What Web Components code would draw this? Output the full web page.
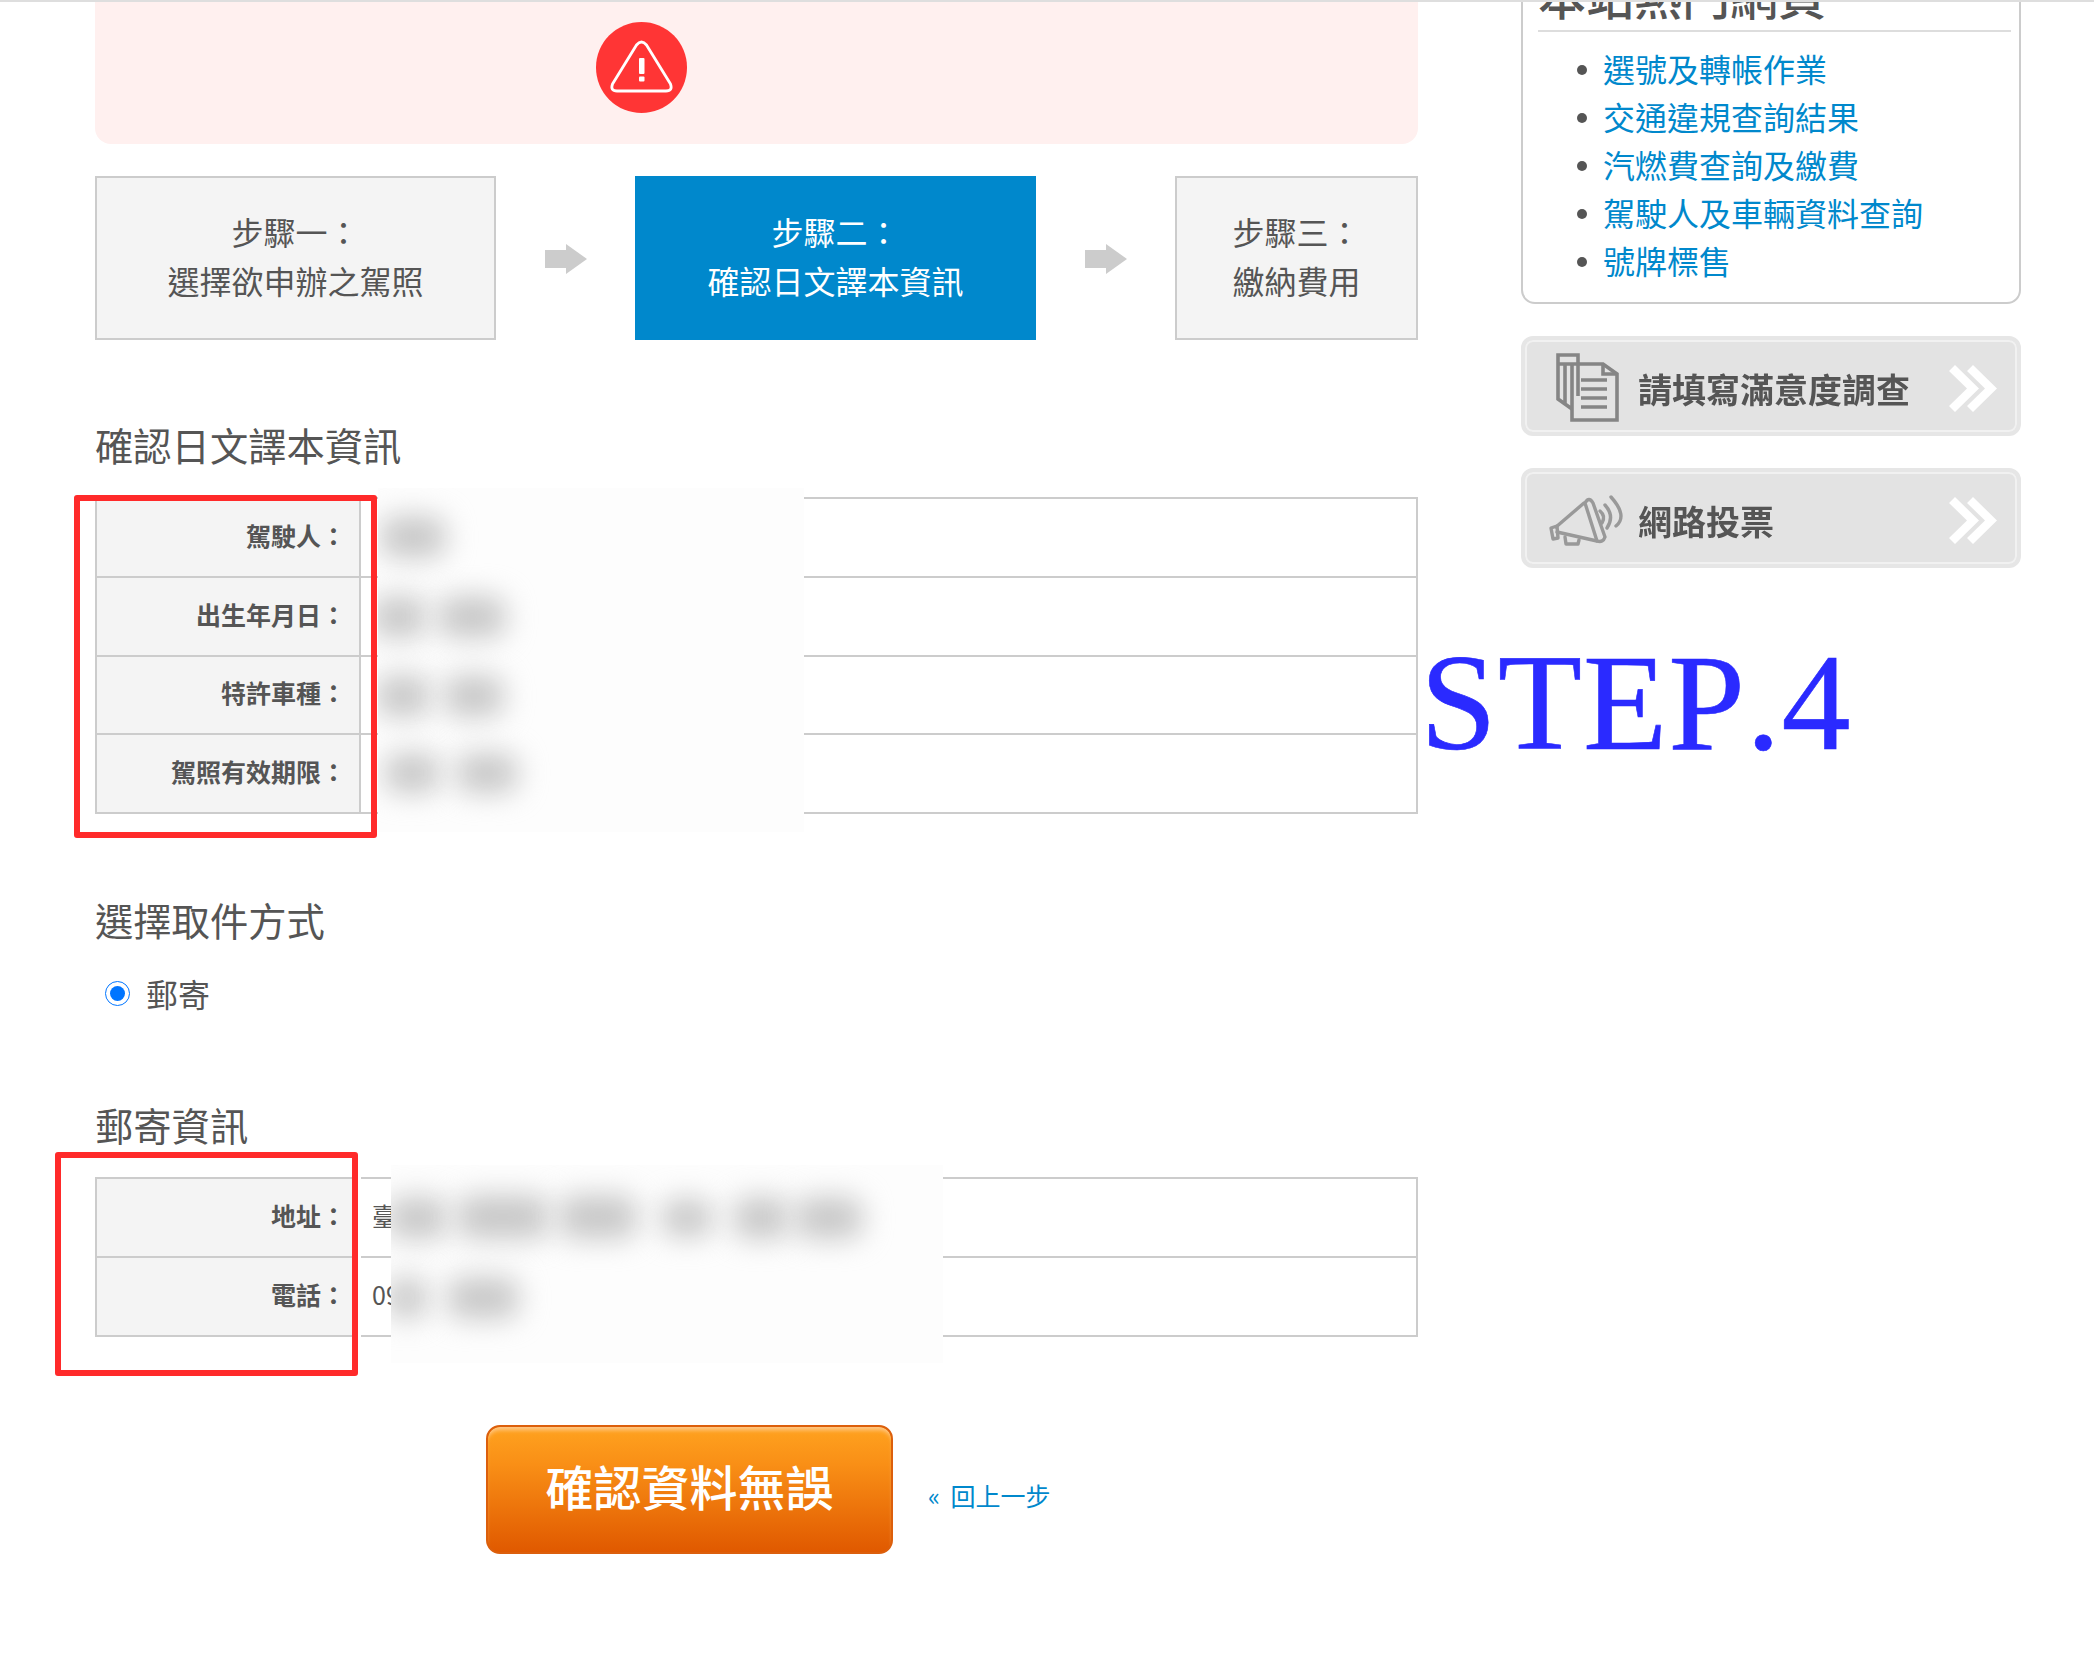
<!DOCTYPE html>
<html lang="zh-Hant">
<head>
<meta charset="utf-8">
<title>確認日文譯本資訊</title>
<style>
  html, body { margin: 0; padding: 0; background: #fff; }
  body { font-family: "Noto Sans CJK TC", "Liberation Sans", sans-serif; color: #555; }
</style>
</head>
<body>
<app-page>
  <alert-box></alert-box>
  <step-flow>
    <step-box style="width:401px">步驟一：<br>選擇欲申辦之駕照</step-box>
    <step-arrow></step-arrow>
    <step-box active style="width:401px">步驟二：<br>確認日文譯本資訊</step-box>
    <step-arrow></step-arrow>
    <step-box style="width:243px">步驟三：<br>繳納費用</step-box>
  </step-flow>

  <section-title style="margin-top:79px">確認日文譯本資訊</section-title>
  <info-table style="margin-top:24px">
    <info-row label="駕駛人："></info-row>
    <info-row label="出生年月日："></info-row>
    <info-row label="特許車種："></info-row>
    <info-row label="駕照有效期限："></info-row>
    <blur-patch style="left:281px;top:-11px;width:426px;height:344px">
      <blur-blob style="left:2px;top:28px;width:66px;height:42px"></blur-blob>
      <blur-blob style="left:-6px;top:108px;width:54px;height:42px"></blur-blob>
      <blur-blob style="left:60px;top:108px;width:68px;height:42px"></blur-blob>
      <blur-blob style="left:-2px;top:187px;width:54px;height:42px"></blur-blob>
      <blur-blob style="left:66px;top:187px;width:60px;height:42px"></blur-blob>
      <blur-blob style="left:6px;top:265px;width:56px;height:40px"></blur-blob>
      <blur-blob style="left:78px;top:265px;width:62px;height:40px"></blur-blob>
    </blur-patch>
    <mark-frame style="left:-23px;top:-4px;width:303px;height:343px"></mark-frame>
  </info-table>

  <section-title style="margin-top:80px">選擇取件方式</section-title>
  <radio-option style="margin-top:21px">郵寄</radio-option>

  <section-title style="margin-top:82px">郵寄資訊</section-title>
  <info-table style="margin-top:24px">
    <info-row label="地址：">臺</info-row>
    <info-row label="電話：">09</info-row>
    <blur-patch style="left:294px;top:-14px;width:552px;height:198px">
      <blur-blob style="left:-4px;top:32px;width:60px;height:42px"></blur-blob>
      <blur-blob style="left:66px;top:30px;width:92px;height:44px"></blur-blob>
      <blur-blob style="left:168px;top:30px;width:78px;height:44px"></blur-blob>
      <blur-blob style="left:270px;top:34px;width:52px;height:38px"></blur-blob>
      <blur-blob style="left:342px;top:32px;width:56px;height:42px"></blur-blob>
      <blur-blob style="left:404px;top:32px;width:68px;height:42px"></blur-blob>
      <blur-blob style="left:-4px;top:112px;width:40px;height:42px"></blur-blob>
      <blur-blob style="left:56px;top:112px;width:72px;height:42px"></blur-blob>
    </blur-patch>
    <mark-frame white-edge style="left:-42px;top:-27px;width:303px;height:224px"></mark-frame>
  </info-table>

  <action-row style="margin-top:88px">
    <confirm-button>確認資料無誤</confirm-button>
    <a href="#">« 回上一步</a>
  </action-row>

  <side-panel slot="side" title="本站熱門網頁">
    <a href="#">選號及轉帳作業</a>
    <a href="#">交通違規查詢結果</a>
    <a href="#">汽燃費查詢及繳費</a>
    <a href="#">駕駛人及車輛資料查詢</a>
    <a href="#">號牌標售</a>
  </side-panel>
  <side-banner slot="side" icon="survey" style="margin-top:32px;height:100px">請填寫滿意度調查</side-banner>
  <side-banner slot="side" icon="vote" style="margin-top:32px;height:100px">網路投票</side-banner>
</app-page>

<script>
// Small helper: every element below only differs by its template
function defineElement(name, html) {
  customElements.define(name, class extends HTMLElement {
    constructor() {
      super();
      this.attachShadow({ mode: 'open' }).innerHTML = html;
    }
  });
}

// Page frame: main column, sidebar, and the blue note drawn over the screenshot
defineElement('app-page', `
  <style>
    :host { display: block; height: 1680px; box-sizing: border-box; border-top: 2px solid #dedede; overflow: hidden; position: relative; }
    .cols { display: flex; gap: 103px; padding-left: 95px; }
    .main { width: 1323px; flex: none; }
    .side { width: 500px; flex: none; margin-top: -52px; }
    .note { position: absolute; left: 1420px; top: 632px; font: 138px/1 "Liberation Serif", serif; font-kerning: none; letter-spacing: 1px; -webkit-text-stroke: .6px #2a2aff; color: #2a2aff; white-space: nowrap; }
  </style>
  <div class="cols">
    <div class="main"><slot></slot></div>
    <div class="side"><slot name="side"></slot></div>
  </div>
  <div class="note">STEP.4</div>
`);

defineElement('alert-box', `
  <style>
    :host { display: flex; box-sizing: border-box; height: 142px; padding: 20px 0 0 501px; background: #fff0ef; border-radius: 0 0 16px 16px; }
    svg { width: 91px; height: 91px; }
  </style>
  <svg viewBox="0 0 91 91">
    <circle cx="45.5" cy="45.5" r="45.5" fill="#ff3535"/>
    <path d="M40.5 23 Q45.5 17 50.5 23 L74.5 62 Q77 69 70 69 L21 69 Q14 69 16.5 62 Z" fill="none" stroke="#fff" stroke-width="2.8" stroke-linejoin="round"/>
    <rect x="43" y="36" width="5.5" height="16" rx="1" fill="#fff"/>
    <rect x="43" y="54.5" width="5.5" height="5" rx="1" fill="#fff"/>
  </svg>
`);

defineElement('step-flow', `
  <style>:host { display: flex; margin-top: 32px; height: 164px; }</style>
  <slot></slot>
`);

defineElement('step-box', `
  <style>
    :host { display: flex; align-items: center; justify-content: center; flex: none; box-sizing: border-box; text-align: center;
      background: #f4f4f4; border: 2px solid #ccc; font-size: 32px; line-height: 49px; color: #555; }
    :host([active]) { background: #0088cc; border-color: #0088cc; color: #fff; }
    div { margin-top: -5px; }
  </style>
  <div><slot></slot></div>
`);

defineElement('step-arrow', `
  <style>
    :host { display: flex; flex: 1; align-items: center; justify-content: center; }
    svg { width: 42px; height: 30px; margin-top: 2px; }
  </style>
  <svg viewBox="0 0 42 30"><path d="M0 6H21V0L42 15 21 30V24H0Z" fill="#ccc"/></svg>
`);

defineElement('section-title', `
  <style>:host { display: block; height: 54px; font-size: 38.3px; line-height: 51px; color: #555; }</style>
  <slot></slot>
`);

defineElement('info-table', `
  <style>:host { display: block; position: relative; border: 2px solid #ccc; border-bottom: 0; }</style>
  <slot></slot>
`);

// One th/td row; the label comes from an attribute, the value from the slot
class InfoRow extends HTMLElement {
  constructor() {
    super();
    this.attachShadow({ mode: 'open' }).innerHTML = `
      <style>
        :host { display: grid; grid-template-columns: 264px 1fr; box-sizing: border-box; height: 78.75px; border-bottom: 2px solid #ccc; font-size: 25px; }
        .th { display: flex; align-items: center; justify-content: flex-end; padding: 0 13px 5px 0; background: #f4f4f4; border-right: 2px solid #ccc; font-weight: 700; color: #555; }
        .td { display: flex; align-items: center; padding: 0 0 5px 11px; color: #555; }
      </style>
      <div class="th"></div>
      <div class="td"><slot></slot></div>
    `;
  }
  connectedCallback() {
    this.shadowRoot.querySelector('.th').textContent = this.getAttribute('label');
  }
}
customElements.define('info-row', InfoRow);

// Redaction patch laid over the table values
defineElement('blur-patch', `
  <style>:host { display: block; position: absolute; background: #fdfdfd; overflow: hidden; }</style>
  <slot></slot>
`);
defineElement('blur-blob', `
  <style>:host { display: block; position: absolute; background: #c8c8c8; filter: blur(14px); border-radius: 16px; }</style>
`);

// Red annotation rectangle
defineElement('mark-frame', `
  <style>
    :host { display: block; position: absolute; box-sizing: border-box; border: 6px solid #ff2a2a; border-radius: 3px; }
    :host([white-edge]) { box-shadow: 3px 0 0 #fff; }
  </style>
`);

defineElement('radio-option', `
  <style>
    :host { display: flex; align-items: center; gap: 16px; height: 48px; padding-left: 10px; font-size: 32px; color: #555; }
    input { width: 25px; height: 25px; margin: 0; accent-color: #0075ff; }
  </style>
  <input type="radio" checked><slot></slot>
`);

defineElement('action-row', `
  <style>
    :host { display: flex; align-items: center; gap: 35px; padding-left: 391px; }
    ::slotted(a) { margin-top: 11px; font-size: 25px; word-spacing: 5px; color: #0088cc; text-decoration: none; }
  </style>
  <slot></slot>
`);

defineElement('confirm-button', `
  <style>
    :host { display: flex; align-items: center; justify-content: center; box-sizing: border-box; width: 407px; height: 129px; padding-bottom: 8px;
      border: 2px solid #dc5f0c; border-radius: 14px; font-size: 48px; font-weight: 500; color: #fff;
      background: linear-gradient(#ffa21f 0%, #f98f16 30%, #e05900 100%); box-shadow: inset 0 5px 4px -2px #ffc98a; }
  </style>
  <slot></slot>
`);

// Sidebar list panel; the page is scrolled so its heading is cut off at the top
class SidePanel extends HTMLElement {
  constructor() {
    super();
    this.attachShadow({ mode: 'open' }).innerHTML = `
      <style>
        :host { display: block; box-sizing: border-box; height: 354px; padding: 12px 8px 0 15px; border: 2px solid #ccc; border-radius: 14px; }
        h3 { margin: 0; padding-bottom: 6px; border-bottom: 2px solid #ddd; font-size: 48px; line-height: 60px; font-weight: 500; color: #555; }
        ul { margin: 12px 0 0; padding: 0 0 0 65px; font-size: 32px; line-height: 48px; }
        li { display: block; position: relative; height: 48px; }
        li::before { content: ""; position: absolute; left: -26px; top: 21px; width: 10px; height: 10px; border-radius: 50%; background: #555; }
        a { color: #0088cc; text-decoration: none; }
      </style>
      <h3></h3>
      <ul></ul>
    `;
  }
  connectedCallback() {
    this.shadowRoot.querySelector('h3').textContent = this.getAttribute('title');
    const list = this.shadowRoot.querySelector('ul');
    this.querySelectorAll('a').forEach((link) => {
      const li = document.createElement('li');
      const a = document.createElement('a');
      a.href = '#';
      a.textContent = link.textContent;
      li.appendChild(a);
      list.appendChild(li);
    });
  }
}
customElements.define('side-panel', SidePanel);

const BANNER_ICONS = {
  survey: `<svg viewBox="0 0 100 100" width="100" height="100" fill="none" stroke="#858585" stroke-width="3.6">
    <path d="M18 15H38V24H18ZM18 24V59L32 69M25 24V63M32 24V66M38 24V56"/>
    <path d="M38 24H63L77 34V80H32V66"/>
    <path d="M63 24V34H77"/>
    <path d="M41 40H67M41 49H67M41 58H67M41 67H67"/>
  </svg>`,
  vote: `<svg viewBox="0 0 100 80" width="100" height="80" fill="none" stroke="#999" stroke-width="3.4" stroke-linecap="round" stroke-linejoin="round">
    <path d="M44 23L16 47M57 61L17 52"/>
    <path d="M45 23Q49 16 53 23L65 57Q63 63 57 61Z"/>
    <path d="M11 48L17 46L18 58L13 59Z"/>
    <path d="M25 57L26 64H38L39 60"/>
    <path d="M60 31Q66 36 62 43"/>
    <path d="M65 25Q75 36 67 48"/>
    <path d="M71 17Q88 36 76 46"/>
  </svg>`
};

class SideBanner extends HTMLElement {
  constructor() {
    super();
    this.attachShadow({ mode: 'open' }).innerHTML = `
      <style>
        :host { display: flex; align-items: center; box-sizing: border-box; position: relative; padding: 5px 0 0 113px; font-size: 34px; font-weight: 700; color: #555;
          background: #e3e3e3; border: 4px solid #e6e6e6; border-radius: 12px; box-shadow: inset 0 0 0 2px #f1f1f1; }
        .text { filter: blur(.5px); white-space: nowrap; }
        .icon { position: absolute; left: 15px; top: 0; filter: blur(.6px); line-height: 0; }
        .more { position: absolute; right: 20px; top: 25px; }
      </style>
      <span class="icon"></span>
      <span class="text"><slot></slot></span>
      <svg class="more" width="48" height="47" viewBox="0 0 48 47" fill="#fff"><path d="M0 6L6 0L30 23.5L6 47L0 41L18 23.5Z"/><path d="M18 6L24 0L48 23.5L24 47L18 41L36 23.5Z"/></svg>
    `;
  }
  connectedCallback() {
    const key = this.getAttribute('icon');
    const icon = this.shadowRoot.querySelector('.icon');
    icon.innerHTML = BANNER_ICONS[key];
    icon.style.top = key === 'vote' ? '8px' : '0';
  }
}
customElements.define('side-banner', SideBanner);
</script>
</body>
</html>
